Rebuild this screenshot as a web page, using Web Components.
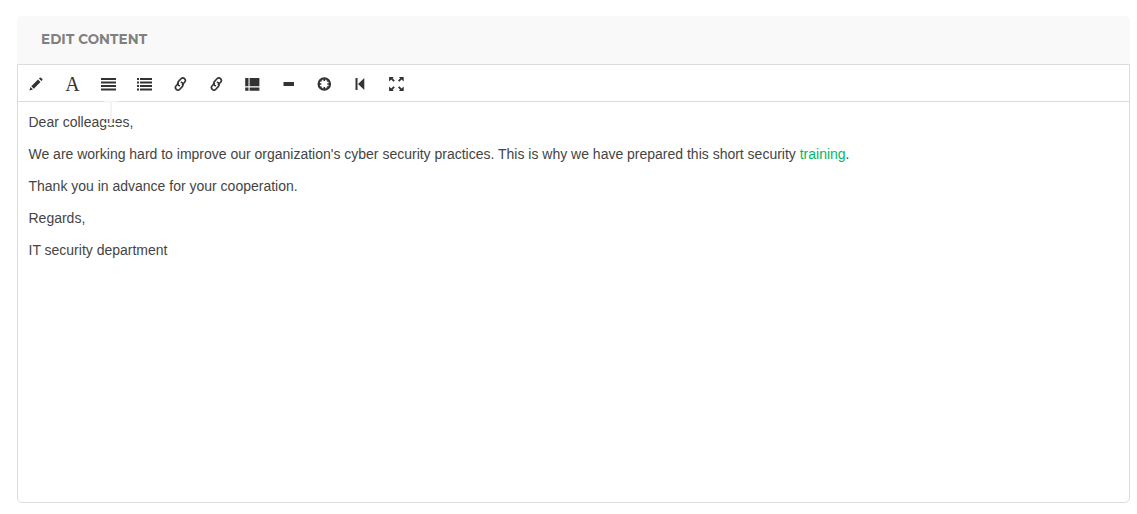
<!DOCTYPE html>
<html lang="en"><head><meta charset="utf-8"><title>Edit content</title>
<style>body{margin:0;background:#fff;font-family:"Liberation Sans",Arial,sans-serif}</style></head>
<body>
<content-editor>
<span slot="title">EDIT CONTENT</span>
<editor-toolbar slot="toolbar"></editor-toolbar>
<editor-document slot="document"></editor-document>
</content-editor>
<script>
class ContentEditor extends HTMLElement{
 constructor(){super();this.attachShadow({mode:'open'}).innerHTML=`
<style>
:host{display:flex;flex-direction:column;box-sizing:border-box;height:514px;padding:16px 7px 11px 17px}
header{box-sizing:border-box;height:48px;background:#f9f9f9;border-radius:5px 5px 0 0;padding:0 24px;display:flex;align-items:center;font:700 13.5px/46px Montserrat,Lato,sans-serif;color:#808080}
header div{height:46px;margin-bottom:2px;letter-spacing:.08px}
main{box-sizing:border-box;flex:1;display:flex;flex-direction:column;border:1px solid #dcdcdc;border-radius:0 0 5px 5px}
</style><header><div><slot name="title"></slot></div></header><main><slot name="toolbar"></slot><slot name="document"></slot></main>`}
}
const icons=[
 ['pencil','<path transform="translate(.4)" d="M1 14.6l1.1-3.5 2.4 2.4zM2.9 10.2 9.6 3.5l2.5 2.5-6.7 6.7zM10.5 2.6l.9-.9q.6-.6 1.2 0l1.3 1.3q.6.6 0 1.2l-.9.9z"/>'],
 ['font',''],
 ['align','<path d="M1 2h15v2H1zM1 5.5h15v2H1zM1 9h15v2H1zM1 12.5h15v2H1z"/>'],
 ['list','<path d="M1 2h2v2H1zM4 2h12v2H4zM1 5.5h2v2H1zM4 5.5h12v2H4zM1 9h2v2H1zM4 9h12v2H4zM1 12.5h2v2H1zM4 12.5h12v2H4z"/>'],
 ['link','<g fill="none" stroke="#333" stroke-width="1.6" stroke-linecap="round" transform="translate(8.4 8) rotate(-47)"><path id="half" d="M1 1.9H4.2a2.5 2.5 0 0 0 0-5H0a2.5 2.5 0 0 0-2 3.6"/><path transform="rotate(180)" d="M1 1.9H4.2a2.5 2.5 0 0 0 0-5H0a2.5 2.5 0 0 0-2 3.6"/></g>'],
 ['link',''],
 ['layout','<path d="M1.2 2h3.3v8.3H1.2zM5.6 2h9.8v8.3H5.6zM1.2 11.5h3.3v3.3H1.2zM5.6 11.5h9.8v3.3H5.6z"/>'],
 ['rule','<path d="M3.5 6h10.5v4H3.5z"/>'],
 ['special','<circle cx="8.3" cy="8" r="5.7" fill="none" stroke="#333" stroke-width="2.2"/><path d="M7.5 2h1.6v3H7.5zM7.5 11h1.6v3H7.5zM2.3 7.2h3v1.6h-3zM11.3 7.2h3v1.6h-3zM4.7 4.4h1.8L4.7 6.2zM11.9 4.4h-1.8l1.8 1.8zM4.7 11.6h1.8L4.7 9.8zM11.9 11.6h-1.8l1.8-1.8z"/>'],
 ['paragraph','<path d="M3.5 2h2v12h-2zM6 8l6.3-6v12z"/>'],
 ['fullscreen','<path transform="translate(.4)" d="M.7 1h4.8L4.2 2.3l2.2 2.2-1.3 1.3L2.8 3.6.7 5.4zM15.3 1h-4.8l1.3 1.3-2.2 2.2 1.3 1.3 2.3-2.2 2.1 1.8zM.7 15h4.8l-1.3-1.3 2.2-2.2-1.3-1.3-2.3 2.2-2.1-1.8zM15.3 15h-4.8l1.3-1.3-2.2-2.2 1.3-1.3 2.3 2.2 2.1-1.8z"/>']
];
icons[4][1]=icons[4][1].replace(' id="half"','');
icons[5][1]=icons[4][1];
class EditorToolbar extends HTMLElement{
 constructor(){super();this.attachShadow({mode:'open'}).innerHTML=`
<style>
:host{display:flex;height:36px;flex:none;border-bottom:1px solid #dcdcdc}
span{width:36px;height:36px;display:flex;align-items:center;justify-content:center}
svg{width:16px;height:16px;fill:#333;margin-top:2px;overflow:visible}
.font{font:20px/20px "Liberation Serif",serif;color:#333}
.font b{font-weight:400;margin:2px 0 0 1px}
</style>`+icons.map(([n,p])=>`<span class="${n}">${n==='font'?'<b>A</b>':`<svg viewBox="0 0 16 16">${p}</svg>`}</span>`).join('')}
}
class EditorDocument extends HTMLElement{
 constructor(){super();this.attachShadow({mode:'open'}).innerHTML=`
<style>
:host{display:block;position:relative;flex:1;padding:9px 10px;font-size:14px;line-height:22px;color:#444;letter-spacing:-.004px}
p{margin:0 0 10px .5px}a{color:#00b864}
svg{position:absolute;left:86px;top:-1px;width:14px;height:25px}
</style><p>Dear colleagues,</p><p>We are working hard to improve our organization's cyber security practices. This is why we have prepared this short security <a>training</a>.</p><p>Thank you in advance for your cooperation.</p><p>Regards,</p><p>IT security department</p>
<svg viewBox="0 0 14 25"><path fill="#fff" d="M0 22h14v2H0z"/><path fill="#f1f3f4" d="M0 0h14v1.5H8V22H6V1.5H0z"/></svg>`}
}
customElements.define('content-editor',ContentEditor);
customElements.define('editor-toolbar',EditorToolbar);
customElements.define('editor-document',EditorDocument);
</script></body></html>
